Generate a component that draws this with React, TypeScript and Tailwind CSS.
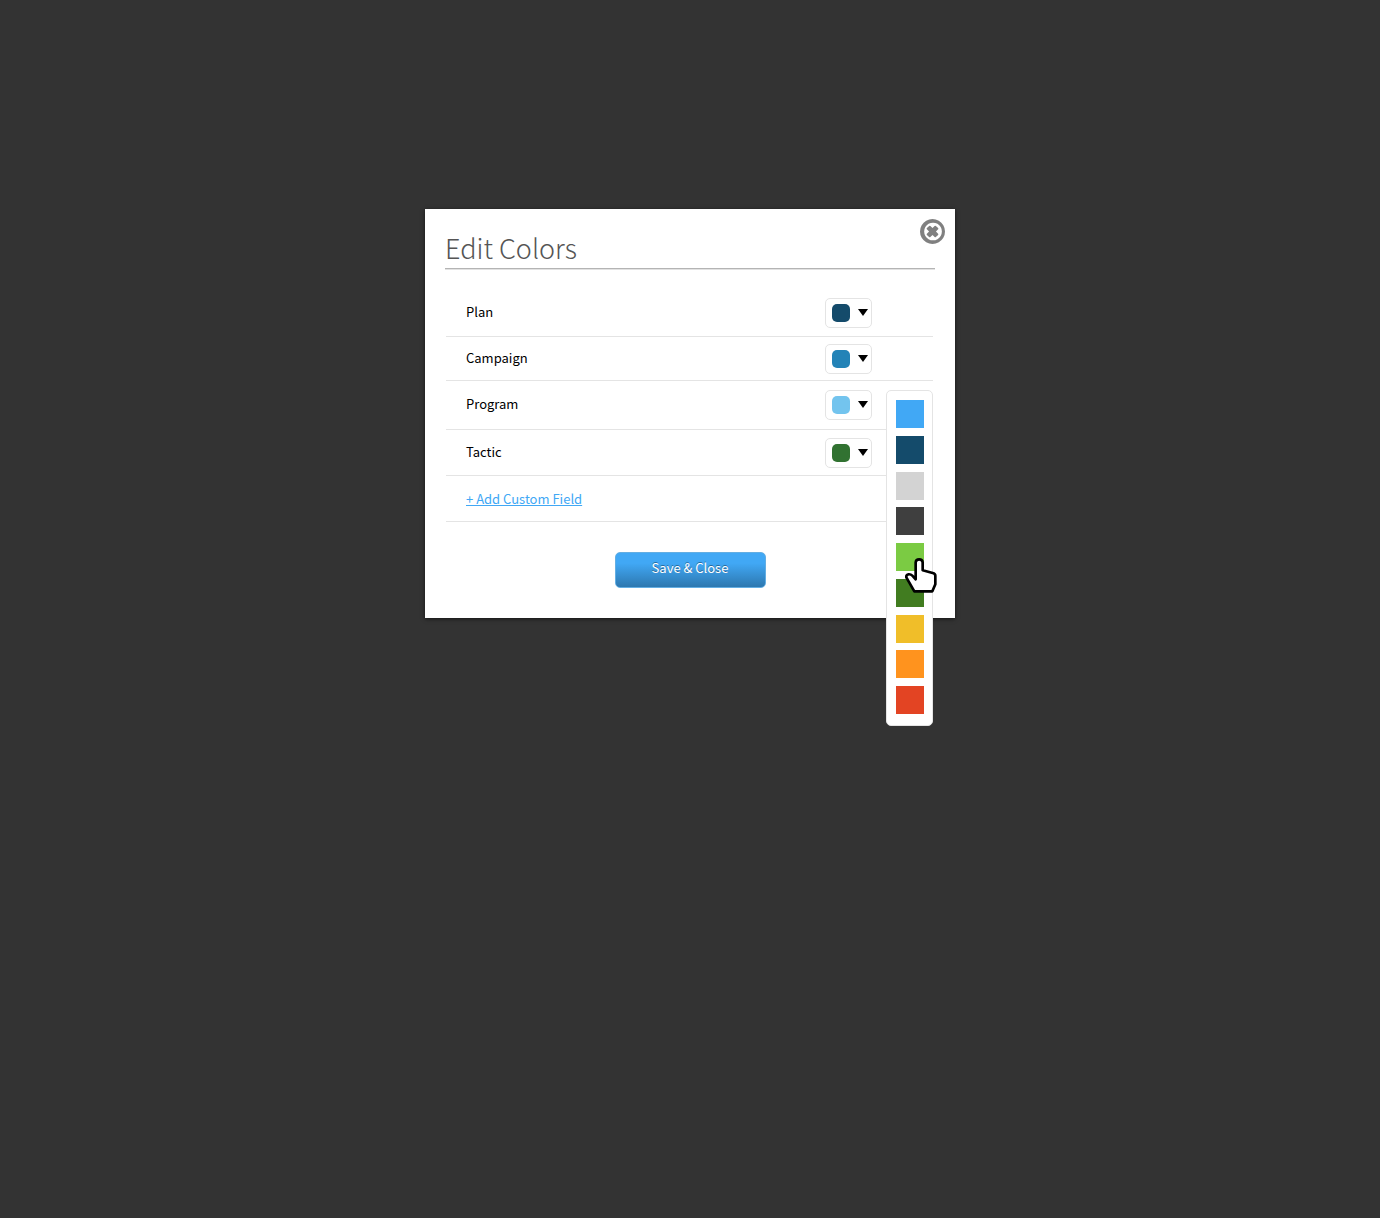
import React from "react";

type Field = { name: string; color: string; row: string; open?: boolean };

const fields: Field[] = [
  { name: "Plan", color: "bg-[#144b6b]", row: "h-[47px]" },
  { name: "Campaign", color: "bg-[#2383b7]", row: "h-11" },
  { name: "Program", color: "bg-[#73c4ee]", row: "h-[49px]", open: true },
  { name: "Tactic", color: "bg-[#317231]", row: "h-[46px]" },
];

const palette = [
  { name: "Blue", color: "bg-[#41a8f5]" },
  { name: "Navy", color: "bg-[#144b6b]" },
  { name: "Light gray", color: "bg-[#d3d3d3]" },
  { name: "Dark gray", color: "bg-[#3f3f3f]" },
  { name: "Lime", color: "bg-[#7bcb43]", hovered: true },
  { name: "Green", color: "bg-[#417c20]" },
  { name: "Yellow", color: "bg-[#f0be29]" },
  { name: "Orange", color: "bg-[#ff931e]" },
  { name: "Red", color: "bg-[#e34423]" },
];

function CloseIcon() {
  return (
    <svg viewBox="128 128 1536 1536" className="size-[25px]" fill="currentColor" aria-hidden="true">
      <path d="M1240 1104l-136 136q-15 15-38 15t-38-15l-132-132-132 132q-15 15-38 15t-38-15l-136-136q-15-15-15-38t15-38l132-132-132-132q-15-15-15-38t15-38l136-136q15-15 38-15t38 15l132 132 132-132q15-15 38-15t38 15l136 136q15 15 15 38t-15 38l-132 132 132 132q15 15 15 38t-15 38zm232-208q0-148-73-273t-198-198-273-73-273 73-198 198-73 273 73 273 198 198 273 73 273-73 198-198 73-273zm192 0q0 209-103 385.5t-279.500 279.500-385.500 103-385.500-103-279.500-279.500-103-385.500 103-385.500 279.500-279.500 385.500-103 385.500 103 279.500 279.500 103 385.500z" />
    </svg>
  );
}

function HandPointer() {
  return (
    <svg
      viewBox="75 69 96 105"
      className="pointer-events-none absolute left-[9px] top-[15px] z-10 h-[35px] w-8"
      aria-hidden="true"
    >
      <path
        d="M107 131V82Q108 73 117.500 73Q127 73 128 82V106L158 114Q166 116 166 122V148L157 169H103L79 127Q78 119 85 118Q92 117 97 122L107 133Z"
        fill="#fff"
        stroke="#000"
        strokeWidth="8"
        strokeLinejoin="round"
      />
    </svg>
  );
}

function Palette() {
  return (
    <div
      role="listbox"
      aria-label="Program color"
      className="absolute right-0 top-[9px] z-10 flex h-[336px] w-[47px] flex-col items-center justify-between rounded-[5px] border border-[#e4e4e4] bg-white pb-[11px] pt-[9px]"
    >
      {palette.map((p) => (
        <div key={p.name} className="relative size-7">
          <button type="button" role="option" aria-selected={false} aria-label={p.name} className={`block size-7 ${p.color}`} />
          {p.hovered && <HandPointer />}
        </div>
      ))}
    </div>
  );
}

export default function App() {
  return (
    <main className="min-h-screen bg-[#333333] px-4 pt-[209px] font-['Noto_Sans_CJK_SC',sans-serif]">
      <section
        role="dialog"
        aria-labelledby="title"
        className="relative mx-auto w-full max-w-[530px] bg-white px-5 pb-[30px] pt-[19px] shadow-[0_1px_4px_rgba(0,0,0,0.6)]"
      >
        <button type="button" aria-label="Close" className="absolute right-[10px] top-[10px] text-[#808080]">
          <CloseIcon />
        </button>
        <h1
          id="title"
          className="border-b border-[#b4b4b4] text-[27px] font-light leading-10 text-[#555555] shadow-[0_1px_0_#e2e2e2]"
        >
          Edit Colors
        </h1>
        <ul className="mt-[21px] pl-px pr-0.5 text-[13px] leading-5 text-black">
          {fields.map((f) => (
            <li
              key={f.name}
              className={`relative flex items-center justify-between border-b border-[#e4e4e4] pl-5 pr-[61px] ${f.row}`}
            >
              <span className="pb-0.5">{f.name}</span>
              <button
                type="button"
                aria-label={`${f.name} color`}
                aria-haspopup="listbox"
                aria-expanded={!!f.open}
                className="flex h-[30px] w-[47px] items-center justify-between rounded-[5px] border border-[#e4e4e4] bg-white pl-1.5 pr-[3px]"
              >
                <span className={`size-[18px] rounded-[5px] ${f.color}`} />
                <svg viewBox="0 0 10 8" className="h-2 w-[10px]" aria-hidden="true">
                  <path d="M0 0H10L5 7Z" />
                </svg>
              </button>
              {f.open && <Palette />}
            </li>
          ))}
          <li className="flex h-[46px] items-center border-b border-[#e4e4e4] pl-5">
            <a href="#add" className="text-[#41a8f5] underline">
              + Add Custom Field
            </a>
          </li>
        </ul>
        <button
          type="button"
          className="mx-auto mt-[30px] block h-9 w-[151px] rounded-[5px] border border-[#63aee3] bg-linear-to-b from-[#41a8f5] from-30% to-[#2d78b0] pb-1 text-[13px] leading-5 text-white [text-shadow:0_-1px_0_rgba(0,0,0,0.35)]"
        >
          Save &amp; Close
        </button>
      </section>
    </main>
  );
}
